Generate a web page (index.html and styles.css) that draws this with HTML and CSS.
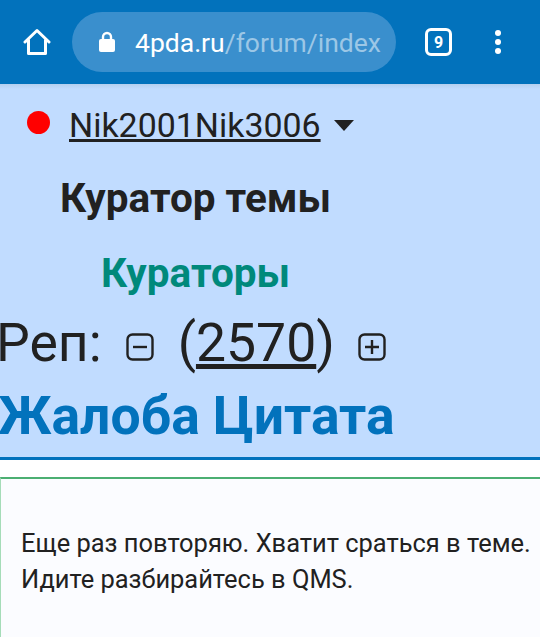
FILE: index.html
```html
<!DOCTYPE html>
<html lang="ru">

<head>
    <meta charset="UTF-8">
    <meta name="viewport" content="width=device-width, initial-scale=1.0">
    <title>4pda.ru</title>
    <link rel="stylesheet" href="styles.css">
</head>

<body>
    <div class="toolbar">
        <svg class="home-icon" width="28" height="28" viewBox="0 0 28 28">
            <path d="M2 14 L14 2.5 L26 14 M5.5 12 V25.5 H22.5 V12" fill="none" stroke="#fff" stroke-width="3"
                stroke-linecap="round" stroke-linejoin="round" />
        </svg>
        <div class="url-bar">
            <svg class="lock-icon" width="16" height="22" viewBox="0 0 16 22">
                <path d="M4 9 V6 a4 4 0 0 1 8 0 V9" fill="none" stroke="#fff" stroke-width="2.4" />
                <rect x="0" y="8" width="16" height="13" rx="2" fill="#fff" />
            </svg>
            <span class="url-text">4pda.ru<span class="url-path">/forum/index</span></span>
        </div>
        <div class="tabs-count">9</div>
        <div class="menu-dots">
            <span class="menu-dot"></span>
            <span class="menu-dot"></span>
            <span class="menu-dot"></span>
        </div>
    </div>

    <div class="user-panel">
        <div class="user-row">
            <span class="status-dot"></span>
            <a class="user-name" href="#">Nik2001Nik3006</a>
            <span class="caret"></span>
        </div>
        <div class="user-title">Куратор темы</div>
        <div class="user-group">Кураторы</div>
        <div class="rep-row">
            <span>Реп:</span>
            <svg class="rep-icon minus" width="28" height="28" viewBox="0 0 28 28">
                <rect x="1.5" y="1.5" width="25" height="25" rx="5" fill="none" stroke="#212121" stroke-width="2.4" />
                <path d="M7 14 H21" stroke="#212121" stroke-width="2.4" />
            </svg>
            <span class="rep-value">(<a href="#">2570</a>)</span>
            <svg class="rep-icon plus" width="28" height="28" viewBox="0 0 28 28">
                <rect x="1.5" y="1.5" width="25" height="25" rx="5" fill="none" stroke="#212121" stroke-width="2.4" />
                <path d="M7 14 H21 M14 7 V21" stroke="#212121" stroke-width="2.4" />
            </svg>
        </div>
        <div class="post-links"><a href="#">Жалоба</a> <a href="#">Цитата</a></div>
    </div>

    <div class="post-body">
        <p>Еще раз повторяю. Хватит сраться в теме.<br>Идите разбирайтесь в QMS.</p>
    </div>
</body>

</html>
```

FILE: styles.css
```css
* {
    box-sizing: border-box;
}

html,
body {
    height: 100%;
}

body {
    margin: 0;
    overflow: hidden;
    background-color: #fff;
    font-family: 'Roboto', sans-serif;
    color: #212121;
    display: flex;
    flex-direction: column;
}

a {
    color: inherit;
}

.toolbar {
    height: 84px;
    background-color: #0272bc;
    display: flex;
    align-items: center;
    padding: 0 0 0 23px;
    flex-shrink: 0;
}

.home-icon {
    flex-shrink: 0;
}

.url-bar {
    width: 324px;
    height: 60px;
    margin-left: 21px;
    padding-left: 27px;
    border-radius: 30px;
    background-color: #3a8fcd;
    display: flex;
    align-items: center;
    gap: 20px;
    overflow: hidden;
}

.lock-icon {
    flex-shrink: 0;
}

.url-text {
    font-size: 26.5px;
    color: #fff;
    white-space: nowrap;
}

.url-path {
    color: #9cc7e6;
}

.tabs-count {
    width: 27px;
    height: 28px;
    margin-left: 29px;
    border: 3px solid #fff;
    border-radius: 6px;
    color: #fff;
    font-size: 16px;
    font-weight: 700;
    display: flex;
    align-items: center;
    justify-content: center;
}

.menu-dots {
    margin-left: 43px;
    display: flex;
    flex-direction: column;
    gap: 3px;
}

.menu-dot {
    width: 6px;
    height: 6px;
    border-radius: 50%;
    background-color: #fff;
}

.user-panel {
    height: 376px;
    background: linear-gradient(#b4cfef, #c1dcff 5px);
    border-bottom: 3px solid #0272bc;
    flex-shrink: 0;
}

.user-row {
    display: flex;
    align-items: center;
    height: 40px;
    margin-top: 21px;
    padding-left: 27px;
}

.status-dot {
    width: 23px;
    height: 23px;
    border-radius: 50%;
    background-color: #f00;
    margin-top: -5px;
}

.user-name {
    font-size: 33.9px;
    margin-left: 19px;
}

.caret {
    width: 0;
    height: 0;
    margin-left: 13px;
    border-left: 10px solid transparent;
    border-right: 10px solid transparent;
    border-top: 11px solid #212121;
}

.user-title {
    font-size: 40.5px;
    font-weight: 700;
    line-height: 44px;
    margin-top: 31px;
    padding-left: 60px;
}

.user-group {
    font-size: 40.5px;
    font-weight: 700;
    line-height: 44px;
    margin-top: 31px;
    padding-left: 101px;
    color: #00897b;
}

.rep-row {
    display: flex;
    align-items: center;
    height: 60px;
    margin-top: 17px;
    font-size: 53.5px;
    margin-left: -4px;
}

.rep-icon {
    flex-shrink: 0;
    margin-top: 10px;
}

.rep-icon.minus {
    margin-left: 24px;
}

.rep-value {
    margin-left: 24px;
}

.rep-icon.plus {
    margin-left: 23px;
}

.post-links {
    font-size: 53.5px;
    font-weight: 700;
    line-height: 60px;
    margin-top: 14px;
    margin-left: -2px;
    color: #0272bc;
}

.post-links a {
    text-decoration: none;
}

.post-body {
    flex: 1;
    margin-top: 17px;
    background-color: #fbfcff;
    border-top: 2px solid #4caf72;
    border-left: 1px solid #a5dcb8;
    padding: 46px 0 0 20px;
}

.post-body p {
    margin: 0;
    font-size: 25.45px;
    line-height: 36px;
}
```
